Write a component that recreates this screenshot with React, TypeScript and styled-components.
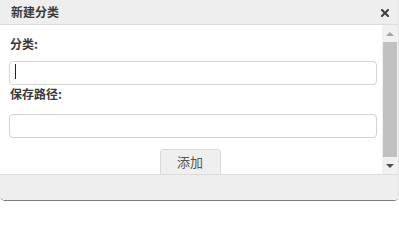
import styled, { createGlobalStyle } from "styled-components";

const GlobalStyle = createGlobalStyle`
  html, body {
    margin: 0;
    padding: 0;
    background: #fff;
  }
  body {
    font-family: "Noto Sans CJK SC", "Noto Sans", sans-serif;
    color: #333;
  }
  * {
    box-sizing: border-box;
  }
`;

const Dialog = styled.div`
  width: 399px;
  height: 201px;
  display: flex;
  flex-direction: column;
  border-right: 1px solid #e4e4e4;
  border-bottom: 1px solid #7a7a7a;
  border-radius: 0 0 5px 5px;
  overflow: hidden;
  background: #fff;
`;

const Header = styled.div`
  height: 25px;
  flex: none;
  display: flex;
  align-items: center;
  justify-content: space-between;
  padding: 0 9px 0 11px;
  background: #eeeeee;
  border-bottom: 1px solid #dcdcdc;
`;

const Title = styled.span`
  font-size: 12px;
  font-weight: bold;
  line-height: 14px;
  color: #3a3a3a;
`;

const CloseButton = styled.button`
  width: 8px;
  height: 8px;
  padding: 0;
  margin-top: 1px;
  border: none;
  background: none;
  display: flex;
  cursor: pointer;
`;

const Body = styled.div`
  height: 149px;
  flex: none;
  display: flex;
  overflow: hidden;
`;

const Form = styled.div`
  flex: 1;
  display: flex;
  flex-direction: column;
  padding: 12px 5px 0 9px;
`;

const Label = styled.label<{ $gap?: number }>`
  display: block;
  margin-top: ${(p) => p.$gap ?? 0}px;
  padding-left: 1px;
  font-size: 12px;
  font-weight: bold;
  line-height: 14px;
  color: #3a3a3a;
`;

const Field = styled.div<{ $gap: number }>`
  position: relative;
  margin-top: ${(p) => p.$gap}px;
`;

const Input = styled.input`
  display: block;
  width: 100%;
  height: 24px;
  padding: 0 6px;
  border: 1px solid #d4d4d4;
  border-radius: 4px;
  font-family: inherit;
  font-size: 12px;
  color: #333;
  outline: none;
`;

const Caret = styled.span`
  position: absolute;
  left: 6px;
  top: 3px;
  width: 1px;
  height: 15px;
  background: #222;
`;

const Actions = styled.div`
  display: flex;
  justify-content: center;
  margin-top: 11px;
  padding-right: 6px;
`;

const Button = styled.button`
  width: 61px;
  height: 28px;
  flex: none;
  border: 1px solid #d9d9d9;
  border-radius: 3px;
  background: #efefef;
  font-family: inherit;
  font-size: 13px;
  line-height: 24px;
  padding: 0 0 2px;
  color: #555;
  cursor: pointer;
`;

const Scrollbar = styled.div`
  width: 16px;
  flex: none;
  display: flex;
  flex-direction: column;
  background: #f1f1f1;
`;

const Arrow = styled.div<{ $down?: boolean }>`
  height: 17px;
  flex: none;
  display: flex;
  align-items: center;
  justify-content: center;
  &::before {
    content: "";
    border-left: 4px solid transparent;
    border-right: 4px solid transparent;
    ${(p) =>
      p.$down
        ? "border-top: 4px solid #505050;"
        : "border-bottom: 4px solid #a3a3a3;"}
  }
`;

const Thumb = styled.div`
  flex: 1;
  margin: 0 1px 0 1px;
  background: #c1c1c1;
`;

const Footer = styled.div`
  flex: 1;
  background: #eeeeee;
  border-top: 1px solid #dcdcdc;
`;

export default function App() {
  return (
    <>
      <GlobalStyle />
      <Dialog>
        <Header>
          <Title>新建分类</Title>
          <CloseButton aria-label="关闭">
            <svg width="8" height="8" viewBox="0 0 8 8">
              <path
                d="M1 1L7 7M7 1L1 7"
                stroke="#3d3d3d"
                strokeWidth="2"
                strokeLinecap="square"
              />
            </svg>
          </CloseButton>
        </Header>
        <Body>
          <Form>
            <Label>分类:</Label>
            <Field $gap={10}>
              <Input type="text" />
              <Caret />
            </Field>
            <Label $gap={2}>保存路径:</Label>
            <Field $gap={13}>
              <Input type="text" />
            </Field>
            <Actions>
              <Button>添加</Button>
            </Actions>
          </Form>
          <Scrollbar>
            <Arrow />
            <Thumb />
            <Arrow $down />
          </Scrollbar>
        </Body>
        <Footer />
      </Dialog>
    </>
  );
}
